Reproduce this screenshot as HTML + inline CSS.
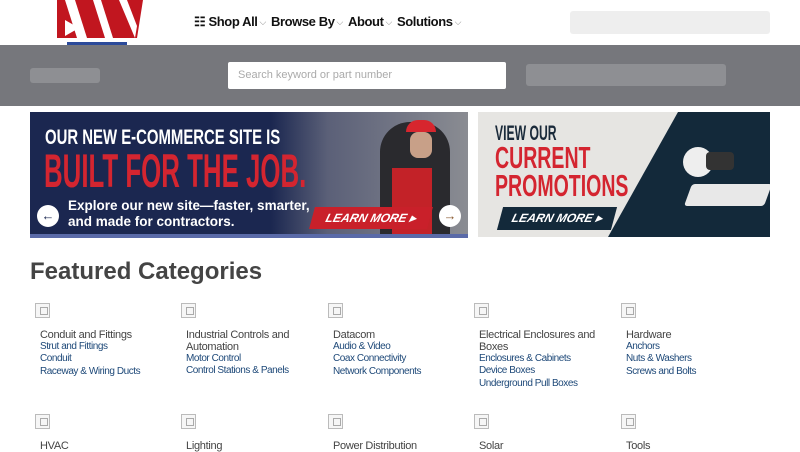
<!DOCTYPE html>
<html><head><meta charset="utf-8"><style>
*{margin:0;padding:0;box-sizing:border-box}
body{width:800px;height:450px;overflow:hidden;background:#fff;font-family:"Liberation Sans",sans-serif;position:relative}
.abs{position:absolute}
.nav{top:14px;left:194px;font-size:13px;font-weight:bold;color:#111;letter-spacing:-0.4px;white-space:nowrap}
.nav span{margin-right:5px}
.nav small{font-weight:normal;color:#888;font-size:9px;margin-left:2px;vertical-align:1px}
.cat{position:absolute;width:140px}
.ic{width:15px;height:15px;border:1px solid #bbb;background:#f6f6f6;position:relative}
.ic:after{content:"";position:absolute;left:4px;top:3px;width:6px;height:6px;border:1px solid #aaa}
.t{font-size:11px;color:#444;margin:11px 0 0 5px;line-height:12px;letter-spacing:-0.3px}
.l{font-size:10px;color:#1d4878;margin-left:5px;line-height:12.4px;letter-spacing:-0.45px}
.cond{font-family:"Liberation Sans Narrow","Liberation Sans",sans-serif;font-weight:bold;transform-origin:left top}
</style></head><body>
<svg class="abs" style="left:57px;top:0" width="88" height="46" viewBox="0 0 88 46">
<polygon points="0,0 86,0 80,38 0,38" fill="#c1161f"/>
<polygon points="8,0 18,0 30,38 20,38" fill="#fff"/>
<polygon points="36,0 44,0 56,38 48,38" fill="#fff"/>
<polygon points="62,0 70,0 80,26 78,38" fill="#fff"/>
<polygon points="8,20 22,28 8,36" fill="#fff"/>
<rect x="10" y="42" width="60" height="3" fill="#2b4a9a"/>
</svg>
<div class="abs nav"><span>☷ Shop All<small>⌵</small></span><span>Browse By<small>⌵</small></span><span>About<small>⌵</small></span><span>Solutions<small>⌵</small></span></div>
<div class="abs" style="left:570px;top:11px;width:200px;height:23px;background:#eee;border-radius:3px"></div>
<div class="abs" style="left:0;top:45px;width:800px;height:61px;background:#76777c"></div>
<div class="abs" style="left:30px;top:68px;width:70px;height:15px;background:#8e8f93;border-radius:3px"></div>
<div class="abs" style="left:228px;top:62px;width:278px;height:27px;background:#fff;border-radius:2px;font-size:11px;color:#aaa;padding:7px 10px">Search keyword or part number</div>
<div class="abs" style="left:526px;top:64px;width:200px;height:22px;background:#8e8f93;border-radius:3px"></div>

<div class="abs" style="left:30px;top:112px;width:438px;height:126px;background:linear-gradient(90deg,#1b2750 0,#1b2750 55%,#5b6078 68%,#8a8c92 100%);overflow:hidden">
 <div class="abs" style="left:350px;top:10px;width:70px;height:116px;background:#2a2a2e;border-radius:30px 30px 0 0"></div>
 <div class="abs" style="left:376px;top:8px;width:30px;height:12px;background:#d7262e;border-radius:12px 12px 0 0"></div>
 <div class="abs" style="left:380px;top:20px;width:22px;height:26px;background:#c8a088;border-radius:8px"></div>
 <div class="abs" style="left:362px;top:56px;width:40px;height:70px;background:#c32228"></div>
 <div class="abs cond" style="left:15px;top:14px;color:#fff;font-size:21px;transform:scaleX(.71);white-space:nowrap">OUR NEW E-COMMERCE SITE IS</div>
 <div class="abs cond" style="left:14px;top:31px;color:#d42530;font-size:47px;transform:scaleX(.55);white-space:nowrap">BUILT FOR THE JOB.</div>
 <div class="abs" style="left:38px;top:86px;color:#fff;font-size:13.5px;font-weight:bold;line-height:16px">Explore our new site—faster, smarter,<br>and made for contractors.</div>
 <div class="abs" style="left:282px;top:95px;width:118px;height:22px;background:#c9202a;transform:skewX(-15deg);color:#fff;font-size:12px;font-weight:bold;font-style:italic;text-align:center;line-height:22px">LEARN MORE ▸</div>
 <div class="abs" style="left:7px;top:93px;width:22px;height:22px;border-radius:50%;background:#fff;color:#1b2750;font-size:13px;text-align:center;line-height:22px;font-weight:bold">←</div>
 <div class="abs" style="left:409px;top:93px;width:22px;height:22px;border-radius:50%;background:#fff;color:#8a5a30;font-size:13px;text-align:center;line-height:22px;font-weight:bold">→</div>
 <div class="abs" style="left:0;top:122px;width:438px;height:4px;background:#5a6aa8"></div>
</div>

<div class="abs" style="left:478px;top:112px;width:292px;height:125px;background:#e6e5e2;overflow:hidden">
 <div class="abs" style="left:130px;top:0;width:200px;height:125px;background:#13293a;clip-path:polygon(35% 0,100% 0,100% 100%,0 100%)"></div>
 <div class="abs" style="left:210px;top:72px;width:80px;height:22px;background:#e8e8e8;transform:skewX(-20deg);border-radius:3px"></div>
 <div class="abs" style="left:205px;top:35px;width:30px;height:30px;background:#eee;border-radius:50%"></div>
 <div class="abs" style="left:228px;top:40px;width:28px;height:18px;background:#333;border-radius:4px"></div>
 <div class="abs cond" style="left:17px;top:10px;color:#1a2a3a;font-size:21px;transform:scaleX(.58);white-space:nowrap">VIEW OUR</div>
 <div class="abs cond" style="left:17px;top:32px;color:#d42530;font-size:31px;line-height:28px;transform:scaleX(.63);white-space:nowrap">CURRENT<br>PROMOTIONS</div>
 <div class="abs" style="left:22px;top:95px;width:114px;height:23px;background:#13293a;transform:skewX(-15deg);color:#fff;font-size:12px;font-weight:bold;font-style:italic;text-align:center;line-height:23px">LEARN MORE ▸</div>
</div>

<div class="abs" style="left:30px;top:258px;font-size:24px;font-weight:bold;color:#444">Featured Categories</div>

<div class="cat" style="left:35px;top:303px"><div class="ic"></div><div class="t">Conduit and Fittings</div><div class="l">Strut and Fittings</div><div class="l">Conduit</div><div class="l">Raceway &amp; Wiring Ducts</div></div>
<div class="cat" style="left:181px;top:303px"><div class="ic"></div><div class="t">Industrial Controls and<br>Automation</div><div class="l">Motor Control</div><div class="l">Control Stations &amp; Panels</div></div>
<div class="cat" style="left:328px;top:303px"><div class="ic"></div><div class="t">Datacom</div><div class="l">Audio &amp; Video</div><div class="l">Coax Connectivity</div><div class="l">Network Components</div></div>
<div class="cat" style="left:474px;top:303px"><div class="ic"></div><div class="t">Electrical Enclosures and<br>Boxes</div><div class="l">Enclosures &amp; Cabinets</div><div class="l">Device Boxes</div><div class="l">Underground Pull Boxes</div></div>
<div class="cat" style="left:621px;top:303px"><div class="ic"></div><div class="t">Hardware</div><div class="l">Anchors</div><div class="l">Nuts &amp; Washers</div><div class="l">Screws and Bolts</div></div>

<div class="cat" style="left:35px;top:414px"><div class="ic"></div><div class="t">HVAC</div></div>
<div class="cat" style="left:181px;top:414px"><div class="ic"></div><div class="t">Lighting</div></div>
<div class="cat" style="left:328px;top:414px"><div class="ic"></div><div class="t">Power Distribution</div></div>
<div class="cat" style="left:474px;top:414px"><div class="ic"></div><div class="t">Solar</div></div>
<div class="cat" style="left:621px;top:414px"><div class="ic"></div><div class="t">Tools</div></div>
</body></html>
